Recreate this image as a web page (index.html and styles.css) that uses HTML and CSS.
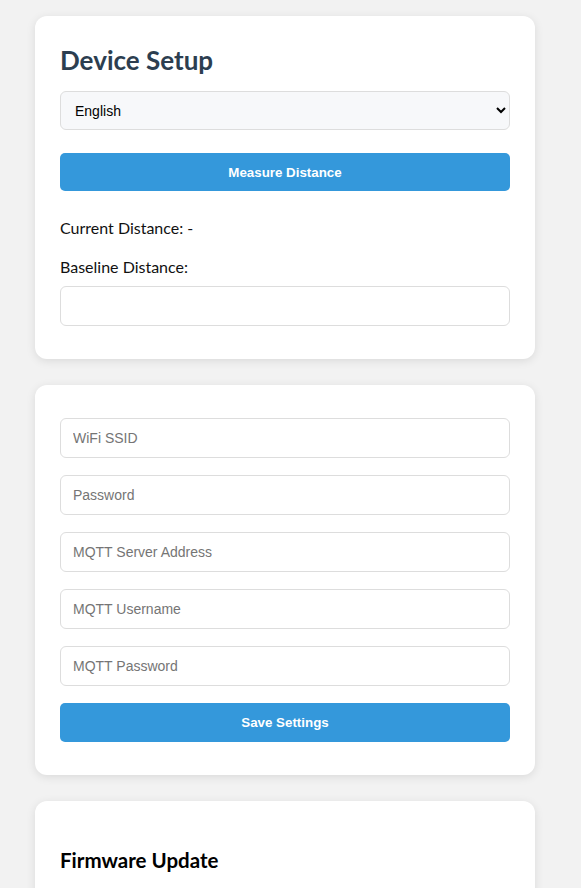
FILE: index.html
```html
<!DOCTYPE html>
<html>
<head>
<meta charset="utf-8">
<link rel="stylesheet" href="styles.css">
</head>
<body>
<div class="container">
  <div class="card">
    <h1 class="title">Device Setup</h1>
    <select class="select">
      <option>English</option>
    </select>
    <button class="btn btn-measure">Measure Distance</button>
    <p class="label">Current Distance: -</p>
    <p class="label label-baseline">Baseline Distance:</p>
    <input class="field" type="text">
  </div>
  <div class="card card-form">
    <input class="field" type="text" placeholder="WiFi SSID">
    <input class="field" type="password" placeholder="Password">
    <input class="field" type="text" placeholder="MQTT Server Address">
    <input class="field" type="text" placeholder="MQTT Username">
    <input class="field" type="password" placeholder="MQTT Password">
    <button class="btn btn-save">Save Settings</button>
  </div>
  <div class="card card-fw">
    <h2 class="subtitle">Firmware Update</h2>
  </div>
</div>
</body>
</html>
```
FILE: styles.css
```css
html, body {
  margin: 0;
  padding: 0;
  background: #f2f2f2;
  font-family: Lato, "Noto Sans", sans-serif;
}
body {
  overflow: hidden;
  height: 888px;
}
.container {
  width: 500px;
  margin-left: 35px;
  padding-top: 16px;
  display: flex;
  flex-direction: column;
  gap: 26px;
}
.card {
  background: #fff;
  border-radius: 12px;
  box-shadow: 0 2px 10px rgba(0,0,0,0.1);
  padding: 25px 25px 33px;
  display: flex;
  flex-direction: column;
}
.title {
  margin: 0;
  padding-top: 1px;
  font-size: 26px;
  font-weight: 700;
  color: #2c3e50;
  line-height: 36px;
  height: 50px;
  box-sizing: border-box;
}
.select {
  height: 39px;
  width: 100%;
  box-sizing: border-box;
  border: 1px solid #ddd;
  border-radius: 6px;
  background: #f7f8fa;
  padding: 0 10px;
  font-family: "Liberation Sans", Arial, sans-serif;
  font-size: 14px;
  color: #000;
}
.btn {
  height: 38px;
  width: 100%;
  border: none;
  border-radius: 5px;
  background: #3498db;
  color: #fff;
  font-family: "Liberation Sans", Arial, sans-serif;
  font-weight: 700;
  font-size: 13.33px;
}
.btn-measure {
  margin-top: 23px;
}
.label {
  margin: 0;
  font-size: 16px;
  line-height: 20px;
  color: #111;
}
.btn-measure + .label {
  margin-top: 27px;
}
.label-baseline {
  margin-top: 19px;
}
.field {
  height: 40px;
  width: 100%;
  box-sizing: border-box;
  border: 1px solid #ddd;
  border-radius: 6px;
  padding: 0 12px;
  font-family: "Liberation Sans", Arial, sans-serif;
  font-size: 14px;
  color: #333;
  background: #fff;
}
.field::placeholder {
  color: #757575;
}
.label-baseline + .field {
  margin-top: 9px;
}
.card-form {
  padding-top: 33px;
  gap: 17px;
}
.card-form .btn-save {
  height: 39px;
}
.card-fw {
  padding-top: 46px;
}
.subtitle {
  margin: 0;
  font-size: 20.5px;
  font-weight: 700;
  color: #000;
  line-height: 26px;
}
```
